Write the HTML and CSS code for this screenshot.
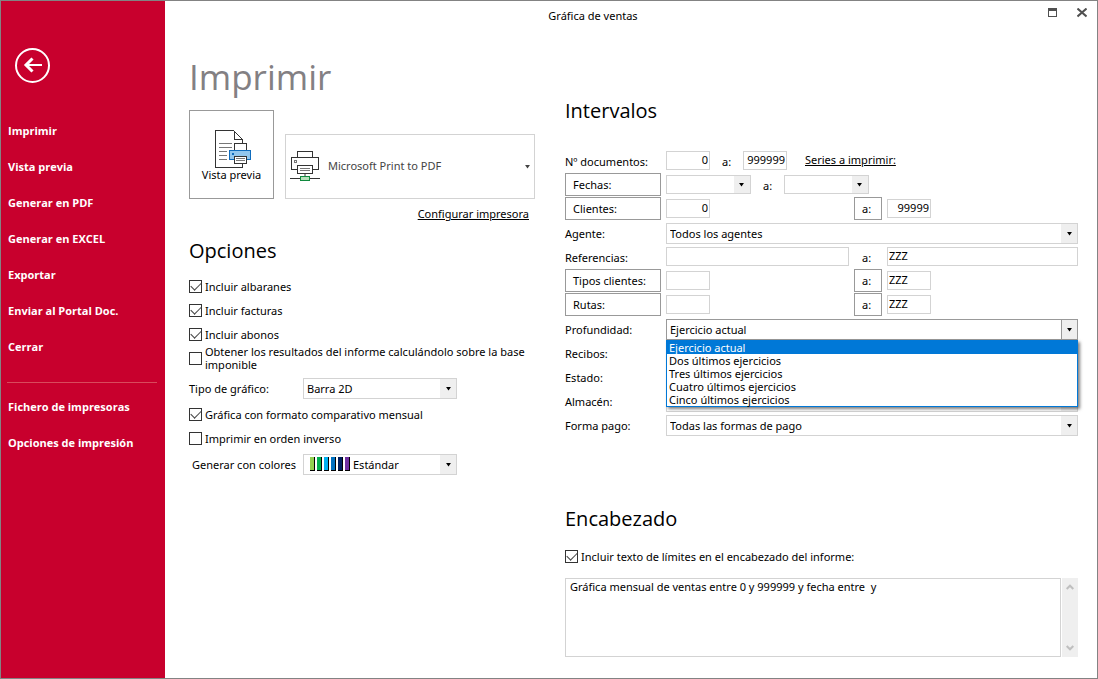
FILE: index.html
```html
<!DOCTYPE html>
<html lang="es">
<head>
<meta charset="utf-8">
<title>Gráfica de ventas</title>
<link rel="stylesheet" href="styles.css">
</head>
<body>
<div class="window">
  <aside class="sidebar">
    <button class="back" type="button" aria-label="Volver">
      <svg width="35" height="35" viewBox="0 0 35 35" fill="none" stroke="#fff">
        <circle cx="17.5" cy="17.5" r="16.5" stroke-width="2"/>
        <path d="M27 17H11" stroke-width="2"/>
        <path d="M17.500 10.500L11 17l6.500 6.500" stroke-width="3"/>
      </svg>
    </button>
    <nav class="nav">
      <a href="#">Imprimir</a>
      <a href="#">Vista previa</a>
      <a href="#">Generar en PDF</a>
      <a href="#">Generar en EXCEL</a>
      <a href="#">Exportar</a>
      <a href="#">Enviar al Portal Doc.</a>
      <a href="#">Cerrar</a>
      <hr>
      <a href="#">Fichero de impresoras</a>
      <a href="#">Opciones de impresión</a>
    </nav>
  </aside>

  <div class="main">
    <header class="titlebar">
      <span class="title">Gráfica de ventas</span>
      <div class="winbuttons">
        <button type="button" aria-label="Maximizar">
          <svg width="10" height="10" viewBox="0 0 10 10" shape-rendering="crispEdges"><path d="M1 0h9v9H1zM2 3v5h7V3z" fill="#505050" fill-rule="evenodd"/></svg>
        </button>
        <button type="button" aria-label="Cerrar ventana">
          <svg width="10" height="10" viewBox="0 0 10 10" stroke="#505050" stroke-width="2"><path d="M.5.5l9 8M9.500.5l-9 8"/></svg>
        </button>
      </div>
    </header>

    <form class="content">
      <section class="left">
        <h1>Imprimir</h1>
        <div class="print-row">
          <button class="preview" type="button">
            <svg width="36" height="38" viewBox="0 0 36 38" fill="none" stroke="#333" shape-rendering="crispEdges">
              <path d="M.5.5h18l9 9V37.500H.5z" fill="#fff"/>
              <path d="M19.500.5v9h8" />
              <path d="M19 1l8.500 8.500" shape-rendering="auto"/>
              <path d="M4 13.500h13M4 17.500h13M4 21.500h8M4 25.500h8M4 29.500h8" stroke="#777"/>
              <path d="M19.500 13.500h12v7h-12z" fill="#fff"/>
              <path d="M14.500 20.500h21v9h-21z" fill="#92c7ee" stroke="#0f6cbd"/>
              <path d="M17 23.500h2" stroke="#0f6cbd" stroke-width="2"/>
              <path d="M19.500 26.500h12v7h-12z" fill="#fff"/>
              <path d="M21 28.500h9M21 30.500h9" stroke="#777"/>
            </svg>
            Vista previa
          </button>
          <div class="select printer">
            <svg width="30" height="31" viewBox="0 0 30 31" fill="none" stroke="#333" shape-rendering="crispEdges">
              <path d="M7.500 6.500v-6h15v6"/>
              <path d="M1.500 6.500h27v12h-27z" fill="#fff"/>
              <path d="M4.500 9.500h2v2h-2z" stroke="#777"/>
              <path d="M7.500 14.500h15v8h-15z" fill="#fff"/>
              <path d="M10 17.500h10M10 19.500h10" stroke="#777"/>
              <path d="M15 23v2" stroke="#999" stroke-width="2"/>
              <path d="M0 27.500h30"/>
              <path d="M10.500 25.500h9v4h-9z" fill="#b5dfb9" stroke="#10893e"/>
            </svg>
            <select aria-label="Impresora"><option>Microsoft Print to PDF</option></select>
          </div>
        </div>
        <a class="config" href="#">Configurar impresora</a>

        <h2>Opciones</h2>
        <div class="options">
          <label class="check"><input type="checkbox" checked>Incluir albaranes</label>
          <label class="check"><input type="checkbox" checked>Incluir facturas</label>
          <label class="check"><input type="checkbox" checked>Incluir abonos</label>
          <label class="check"><input type="checkbox"><span>Obtener los resultados del informe calculándolo sobre la base imponible</span></label>
          <div class="option-row">
            <label for="tipo">Tipo de gráfico:</label>
            <div class="select"><select id="tipo"><option>Barra 2D</option></select></div>
          </div>
          <label class="check"><input type="checkbox" checked>Gráfica con formato comparativo mensual</label>
          <label class="check"><input type="checkbox">Imprimir en orden inverso</label>
          <div class="option-row colors">
            <label for="colores">Generar con colores</label>
            <div class="select">
              <span class="swatches"><i class="c1"></i><i class="c2"></i><i class="c3"></i><i class="c4"></i><i class="c5"></i><i class="c6"></i></span>
              <select id="colores"><option>Estándar</option></select>
            </div>
          </div>
        </div>
      </section>

      <section class="right">
        <h2>Intervalos</h2>
        <div class="fields">
          <div class="row">
            <label for="doc1">Nº documentos:</label>
            <div class="inline span">
              <input class="short num" id="doc1" value="0">
              <label class="to" for="doc2">a:</label>
              <input class="short num" id="doc2" value="999999">
              <a class="series" href="#">Series a imprimir:</a>
            </div>
          </div>
          <div class="row">
            <button type="button">Fechas:</button>
            <div class="inline span">
              <div class="select date"><select aria-label="Fecha desde"><option></option></select></div>
              <label class="to" for="fecha2">a:</label>
              <div class="select date"><select id="fecha2"><option></option></select></div>
            </div>
          </div>
          <div class="row">
            <button type="button">Clientes:</button>
            <input class="short num" aria-label="Cliente desde" value="0">
            <button type="button">a:</button>
            <input class="short num" aria-label="Cliente hasta" value="99999">
          </div>
          <div class="row">
            <label for="agente">Agente:</label>
            <div class="select span"><select id="agente"><option>Todos los agentes</option></select></div>
          </div>
          <div class="row">
            <label for="ref1">Referencias:</label>
            <input id="ref1">
            <label class="mid" for="ref2">a:</label>
            <input id="ref2" value="ZZZ">
          </div>
          <div class="row">
            <button type="button">Tipos clientes:</button>
            <input class="short" aria-label="Tipo de cliente desde">
            <button type="button">a:</button>
            <input class="short" aria-label="Tipo de cliente hasta" value="ZZZ">
          </div>
          <div class="row">
            <button type="button">Rutas:</button>
            <input class="short" aria-label="Ruta desde">
            <button type="button">a:</button>
            <input class="short" aria-label="Ruta hasta" value="ZZZ">
          </div>
          <div class="row">
            <label for="prof">Profundidad:</label>
            <div class="select span open">
              <select id="prof"><option>Ejercicio actual</option></select>
              <ul class="popup" role="listbox" aria-label="Profundidad">
                <li role="option" aria-selected="true">Ejercicio actual</li>
                <li role="option">Dos últimos ejercicios</li>
                <li role="option">Tres últimos ejercicios</li>
                <li role="option">Cuatro últimos ejercicios</li>
                <li role="option">Cinco últimos ejercicios</li>
              </ul>
            </div>
          </div>
          <div class="row">
            <label for="recibos">Recibos:</label>
            <div class="select span"><select id="recibos"><option></option></select></div>
          </div>
          <div class="row">
            <label for="estado">Estado:</label>
            <div class="select span"><select id="estado"><option></option></select></div>
          </div>
          <div class="row">
            <label for="almacen">Almacén:</label>
            <div class="select span"><select id="almacen"><option></option></select></div>
          </div>
          <div class="row">
            <label for="pago">Forma pago:</label>
            <div class="select span"><select id="pago"><option>Todas las formas de pago</option></select></div>
          </div>
        </div>

        <h2 class="head2">Encabezado</h2>
        <label class="check"><input type="checkbox" checked>Incluir texto de límites en el encabezado del informe:</label>
        <div class="memo">
          <textarea aria-label="Texto del encabezado">Gráfica mensual de ventas entre 0 y 999999 y fecha entre  y</textarea>
          <div class="scroll">
            <button type="button" aria-label="Subir"><svg width="8" height="6" viewBox="0 0 8 6" fill="none" stroke="#bfbfbf" stroke-width="2"><path d="M.7 5L4 1.700 7.300 5"/></svg></button>
            <button type="button" aria-label="Bajar"><svg width="8" height="6" viewBox="0 0 8 6" fill="none" stroke="#bfbfbf" stroke-width="2"><path d="M.7 1L4 4.300 7.300 1"/></svg></button>
          </div>
        </div>
      </section>
    </form>
  </div>
</div>
</body>
</html>
```

FILE: styles.css
```css
* { box-sizing: border-box; }

body {
  margin: 0;
  background: #fff;
  color: #000;
  font-family: "Noto Sans", "Open Sans", sans-serif;
  font-size: 11px;
  line-height: 13px;
}

button, input, select, textarea {
  margin: 0;
  padding: 0;
  border: 1px solid #d3d3d3;
  border-radius: 0;
  background: #fff;
  color: inherit;
  font: inherit;
}

a { color: inherit; }

.window {
  display: flex;
  min-height: 100vh;
  border: 1px solid #838383;
}

.sidebar {
  flex: none;
  width: 164px;
  padding: 47px 8px 0 6px;
  background: #c8002d;
  color: #fff;
}

.back {
  display: block;
  margin-left: 8px;
  border: 0;
  background: none;
}

.back svg { display: block; }

.nav {
  display: flex;
  flex-direction: column;
  margin-top: 30px;
  font-family: "Open Sans", sans-serif;
  font-weight: 700;
}

.nav a {
  padding-left: 1px;
  line-height: 36px;
  text-decoration: none;
}

.nav hr {
  width: 100%;
  height: 1px;
  margin: 17px 0 6px;
  border: 0;
  background: #d94a5c;
}

.main {
  display: flex;
  flex: 1;
  flex-direction: column;
  min-width: 0;
}

.titlebar {
  display: flex;
  align-items: flex-start;
  height: 30px;
}

.title {
  flex: 1;
  line-height: 30px;
  text-align: center;
}

.winbuttons {
  display: flex;
  gap: 20px;
  width: 76px;
  padding: 7px 0 0 26px;
}

.winbuttons button {
  width: 10px;
  border: 0;
  background: none;
}

.winbuttons svg { display: block; }

.content {
  display: grid;
  grid-template-columns: minmax(0, 346fr) minmax(0, 513fr);
  gap: 30px;
  padding: 0 19px 20px 24px;
}

h1, h2 {
  margin: 0;
  font-family: "Open Sans", sans-serif;
  font-weight: 400;
}

h1 {
  margin: 22px 0 9px;
  color: #838083;
  font-size: 35px;
  line-height: 48px;
}

h2 {
  font-size: 20px;
  line-height: 28px;
}

.print-row {
  display: flex;
  align-items: flex-end;
  gap: 11px;
}

.preview {
  display: flex;
  flex-direction: column;
  align-items: center;
  width: 85px;
  height: 89px;
  padding-top: 19px;
  border-color: #999;
}

.preview svg { margin-left: 3px; }

.select {
  position: relative;
  height: 21px;
}

.select select {
  display: block;
  width: 100%;
  height: 100%;
  padding: 0 20px 0 3px;
  appearance: none;
  background: linear-gradient(#efefef, #efefef) right / 16px 100% no-repeat #fff;
  line-height: 17px;
}

.select::after {
  content: "";
  position: absolute;
  top: 50%;
  right: 5px;
  width: 7px;
  height: 4px;
  margin-top: -2px;
  background: #000;
  clip-path: polygon(10% 0, 90% 0, 50% 100%);
  pointer-events: none;
}

.printer {
  flex: 1;
  height: 65px;
}

.printer select {
  padding-bottom: 2px;
  padding-left: 42px;
  background: #fff;
  color: #444;
}

.printer svg {
  position: absolute;
  top: 17px;
  left: 5px;
  pointer-events: none;
}

.printer::after { right: 4px; background: #444; }

.config {
  display: block;
  margin: 7px 6px 15px 0;
  line-height: 16px;
  text-align: right;
}

.options { margin-top: 9px; }

.check {
  display: flex;
  align-items: center;
  gap: 3px;
  height: 24px;
}

.check input {
  flex: none;
  display: grid;
  place-items: center;
  width: 13px;
  height: 13px;
  border-color: #333;
  appearance: none;
}

.check input:checked::after {
  content: "";
  width: 9px;
  height: 5px;
  margin-bottom: 3px;
  border: solid #444;
  border-width: 0 0 1px 1px;
  transform: rotate(-45deg);
}

.option-row {
  display: grid;
  grid-template-columns: 114px 154px;
  align-items: center;
  margin: 8px 0 3px;
}

.colors { margin-top: 4px; }
.colors label { padding-left: 3px; }
.colors select { padding-left: 49px; }

.swatches {
  position: absolute;
  top: 3px;
  left: 7px;
  display: flex;
  gap: 2px;
  pointer-events: none;
}

.swatches i {
  width: 5px;
  height: 14px;
  border: solid #000;
  border-width: 0 1px 1px 0;
}

.c1 { background: #92d050; }
.c2 { background: #00b050; }
.c3 { background: #00b0f0; }
.c4 { background: #0070c0; }
.c5 { background: #002060; }
.c6 { background: #7030a0; }

.right h2 { margin-top: 66px; }

.fields { margin-top: 24px; }

.row {
  display: grid;
  grid-template-columns: 96px minmax(0, 183fr) 28px minmax(0, 191fr);
  column-gap: 5px;
  height: 24px;
}

.row label { line-height: 26px; }

.row button {
  height: 23px;
  padding-left: 7px;
  border-color: #999;
  text-align: left;
}

.row input {
  width: 100%;
  height: 19px;
  margin-top: 2px;
  padding: 0 1px 2px;
}

.row .select { margin-top: 2px; }
.row .span { grid-column: 2 / -1; }
.row .short { width: 44px; }
.row .num { text-align: right; }

.row .mid, .row .to { padding-left: 8px; }

.inline { display: flex; }
.inline .to { width: 33px; padding-left: 12px; }
.row .date { width: 85px; height: 19px; }

.date::after { right: 6px; }

.series {
  margin-left: 18px;
  line-height: 22px;
}

.open { z-index: 1; }

.open select {
  border-color: #999;
  background: linear-gradient(#999, #999) right 15px top / 1px 100% no-repeat,
    linear-gradient(#efefef, #efefef) right / 15px 100% no-repeat #fff;
}

.popup {
  position: absolute;
  top: 100%;
  left: 0;
  right: 0;
  margin: 0;
  border: 1px solid #0078d7;
  padding: 0;
  list-style: none;
  background: #fff;
  box-shadow: 2px 2px 3px rgba(0, 0, 0, .5);
}

.popup li { padding-left: 2px; }

.popup [aria-selected] {
  background: #0078d7;
  color: #fff;
}

.right .head2 { margin: 68px 0 11px; }

.memo {
  display: flex;
  gap: 1px;
  height: 79px;
  margin-top: 10px;
}

.memo textarea {
  flex: 1;
  padding: 1px 4px;
  overflow: hidden;
  resize: none;
}

.scroll {
  display: flex;
  flex-direction: column;
  justify-content: space-between;
  width: 16px;
  background: #efefef;
}

.scroll button {
  display: grid;
  place-items: center;
  height: 18px;
  border: 0;
  background: none;
}
```
